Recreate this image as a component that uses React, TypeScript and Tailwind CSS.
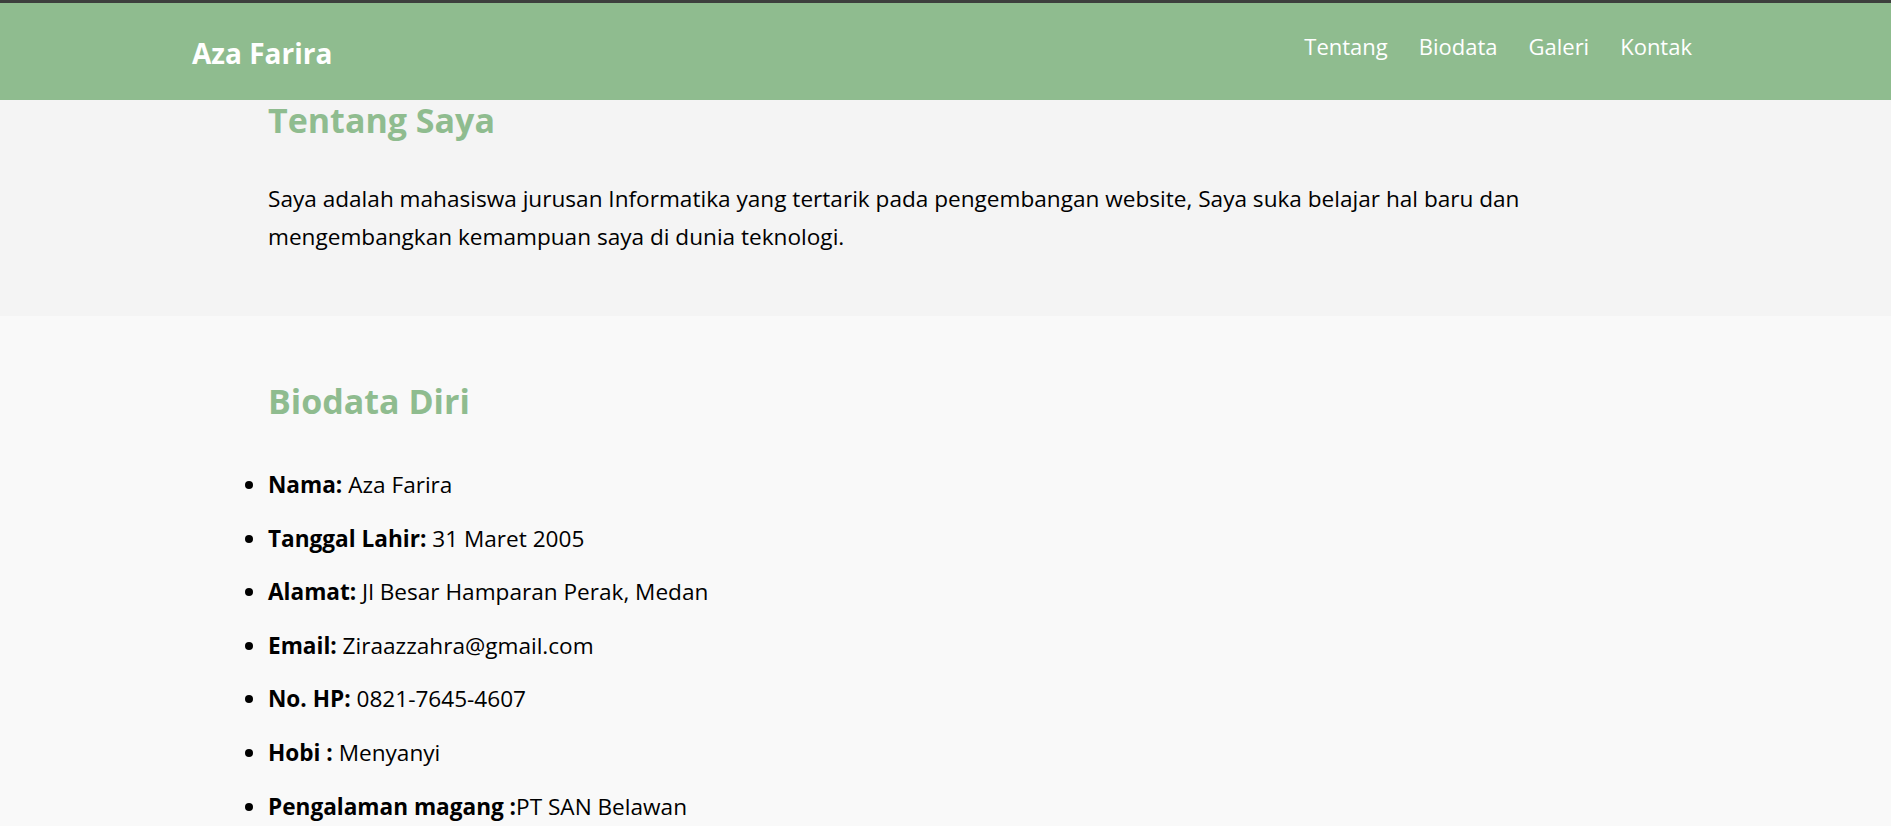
import React from 'react';

const navLinks = ['Tentang', 'Biodata', 'Galeri', 'Kontak'];

const biodata: { label: string; value: string }[] = [
  { label: 'Nama:', value: ' Aza Farira' },
  { label: 'Tanggal Lahir:', value: ' 31 Maret 2005' },
  { label: 'Alamat:', value: ' Jl Besar Hamparan Perak, Medan' },
  { label: 'Email:', value: ' Ziraazzahra@gmail.com' },
  { label: 'No. HP:', value: ' 0821-7645-4607' },
  { label: 'Hobi :', value: ' Menyanyi' },
  { label: 'Pengalaman magang :', value: 'PT SAN Belawan' },
];

export default function App() {
  return (
    <div className="min-h-screen bg-[#f9f9f9] text-black font-['Open_Sans',_'Noto_Sans',_sans-serif]">
      {/* browser top edge */}
      <div className="h-[3px] bg-[#3d3f3d]" />

      {/* Header */}
      <header className="h-[97px] bg-[#8fbc8f] flex items-center justify-between pl-[192px] pr-[199px]">
        <h1 className="mt-[3px] text-[28px] leading-none font-bold text-white">Aza Farira</h1>
        <nav className="mb-[12px]">
          <ul className="flex gap-[31px] text-[22px] leading-none text-white">
            {navLinks.map((link) => (
              <li key={link}>
                <a href={`#${link.toLowerCase()}`}>{link}</a>
              </li>
            ))}
          </ul>
        </nav>
      </header>

      {/* Tentang */}
      <section id="tentang" className="bg-[#f4f4f4] px-[268px] pt-[3px] pb-[60px]">
        <h2 className="text-[34px] leading-none font-bold text-[#8fbc8f]">Tentang Saya</h2>
        <p className="mt-[43px] text-[22.6px] leading-[38px]">
          Saya adalah mahasiswa jurusan Informatika yang tertarik pada pengembangan website, Saya suka belajar hal baru dan mengembangkan kemampuan saya di dunia teknologi.
        </p>
      </section>

      {/* Biodata */}
      <section id="biodata" className="bg-[#f9f9f9] px-[268px] pt-[68px] pb-[60px]">
        <h2 className="text-[34px] leading-none font-bold text-[#8fbc8f]">Biodata Diri</h2>
        <ul className="mt-[48px] list-disc list-outside text-[22.6px] leading-[38.4px]">
          {biodata.map((item) => (
            <li key={item.label} className="mb-[15.2px]">
              <strong className="font-bold">{item.label}</strong>
              {item.value}
            </li>
          ))}
        </ul>
      </section>
    </div>
  );
}
